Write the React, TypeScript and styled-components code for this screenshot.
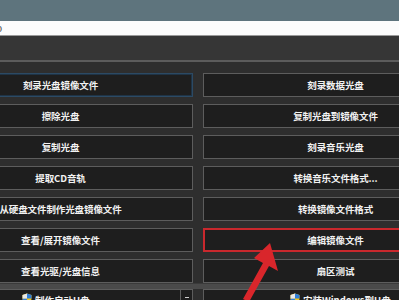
import React from "react";
import styled, { createGlobalStyle } from "styled-components";

const Global = createGlobalStyle`
  html, body { margin: 0; padding: 0; background: #2e2e2e; }
  body { width: 399px; height: 300px; overflow: hidden; font-family: "Noto Sans CJK SC", "Noto Sans", sans-serif; }
`;

const Page = styled.div`
  position: relative;
  width: 399px;
  height: 300px;
  overflow: hidden;
  display: flex;
  flex-direction: column;
  background: #2e2e2e;
`;

const TitleBar = styled.div`
  height: 21px;
  flex: none;
  background: #5e747d;
`;

const PathField = styled.div`
  height: 14px;
  flex: none;
  background: #fcfcfc;
  border-bottom: 1px solid #9a9a9a;
  font-family: "Liberation Sans", sans-serif;
  font-size: 11px;
  line-height: 14px;
  color: #555;
  text-indent: -4px;
  overflow: hidden;
`;

const Toolbar = styled.div`
  height: 24px;
  flex: none;
  background: #363636;
  border-bottom: 2px solid #5c5c5c;
`;

const Content = styled.div`
  flex: 1;
  padding-top: 11px;
  margin-left: -72px;
  display: flex;
  flex-direction: column;
`;

const Grid = styled.div`
  display: grid;
  grid-template-columns: 265px 265px;
  grid-auto-rows: 24px;
  column-gap: 10px;
  row-gap: 7px;
`;

type Tone = "normal" | "focus" | "marked";

const Btn = styled.div<{ $tone: Tone }>`
  box-sizing: border-box;
  display: flex;
  align-items: center;
  justify-content: center;
  background: #1e1e1e;
  border: ${(p) =>
    p.$tone === "marked"
      ? "2px solid #c9282d"
      : p.$tone === "focus"
      ? "1px solid #2c4a64"
      : "1px solid #5d5d5d"};
  box-shadow: ${(p) => (p.$tone === "focus" ? "inset 0 0 0 1px #1f3345" : "none")};
  color: #f2f2f2;
  font-size: 9.5px;
  font-weight: 700;
  letter-spacing: -0.1px;
  white-space: nowrap;
`;

const Strip = styled.div`
  height: 5px;
  background: #4a4a4a;
  border-top: 1px solid #3a3a3a;
`;

const BottomRow = styled.div`
  display: grid;
  grid-template-columns: 265px 265px;
  column-gap: 10px;
  height: 30px;
`;

const SplitBtn = styled.div`
  box-sizing: border-box;
  display: flex;
  background: #1e1e1e;
  border: 1px solid #5d5d5d;
`;

const SplitMain = styled.div<{ $indent: number }>`
  flex: 1;
  display: flex;
  align-items: flex-start;
  padding-top: 3px;
  padding-left: ${(p) => p.$indent}px;
  gap: 3px;
  color: #f2f2f2;
  font-size: 9.5px;
  font-weight: 700;
  white-space: nowrap;
`;

const SplitArrow = styled.div`
  width: 12px;
  border-left: 1px solid #5d5d5d;
  display: flex;
  justify-content: center;
  padding-top: 7px;
  box-sizing: border-box;
  &::after {
    content: "";
    width: 4px;
    height: 1px;
    background: #cfcfcf;
  }
`;

const Shield = () => (
  <svg width="10" height="11" viewBox="0 0 10 11">
    <path d="M5 0.5 L9.5 2 V5.5 C9.5 8 7.5 9.8 5 10.6 C2.5 9.8 0.5 8 0.5 5.5 V2 Z" fill="#f3c41c" />
    <path d="M5 0.5 L9.5 2 V5.5 H5 Z" fill="#2f7fd8" />
    <path d="M0.5 5.5 H5 V10.6 C2.5 9.8 0.5 8 0.5 5.5 Z" fill="#2f7fd8" />
    <path d="M5 0.5 L0.5 2 V5.5 H5 Z" fill="#e8e8e8" />
  </svg>
);

const Arrow = styled.svg`
  position: absolute;
  left: 236px;
  top: 238px;
`;

const rows: [string, string][] = [
  ["刻录光盘镜像文件", "刻录数据光盘"],
  ["擦除光盘", "复制光盘到镜像文件"],
  ["复制光盘", "刻录音乐光盘"],
  ["提取CD音轨", "转换音乐文件格式..."],
  ["从硬盘文件制作光盘镜像文件", "转换镜像文件格式"],
  ["查看/展开镜像文件", "编辑镜像文件"],
  ["查看光驱/光盘信息", "扇区测试"],
];

export default function App() {
  return (
    <Page>
      <Global />
      <TitleBar />
      <PathField>o</PathField>
      <Toolbar />
      <Content>
        <Grid>
          {rows.map(([l, r], i) => (
            <React.Fragment key={i}>
              <Btn $tone={i === 0 ? "focus" : "normal"}>{l}</Btn>
              <Btn $tone={i === 5 ? "marked" : "normal"}>{r}</Btn>
            </React.Fragment>
          ))}
        </Grid>
        <Strip />
        <BottomRow>
          <SplitBtn>
            <SplitMain $indent={93}>
              <Shield />
              制作启动U盘
            </SplitMain>
            <SplitArrow />
          </SplitBtn>
          <SplitBtn>
            <SplitMain $indent={86}>
              <Shield />
              安装Windows到U盘
            </SplitMain>
          </SplitBtn>
        </BottomRow>
      </Content>
      <Arrow width="50" height="64" viewBox="0 0 50 64">
        <path d="M34 5 L42 33 L33 28 L13 64 L7 61 L27 25 L18 20 Z" fill="#d9262b" />
      </Arrow>
    </Page>
  );
}
